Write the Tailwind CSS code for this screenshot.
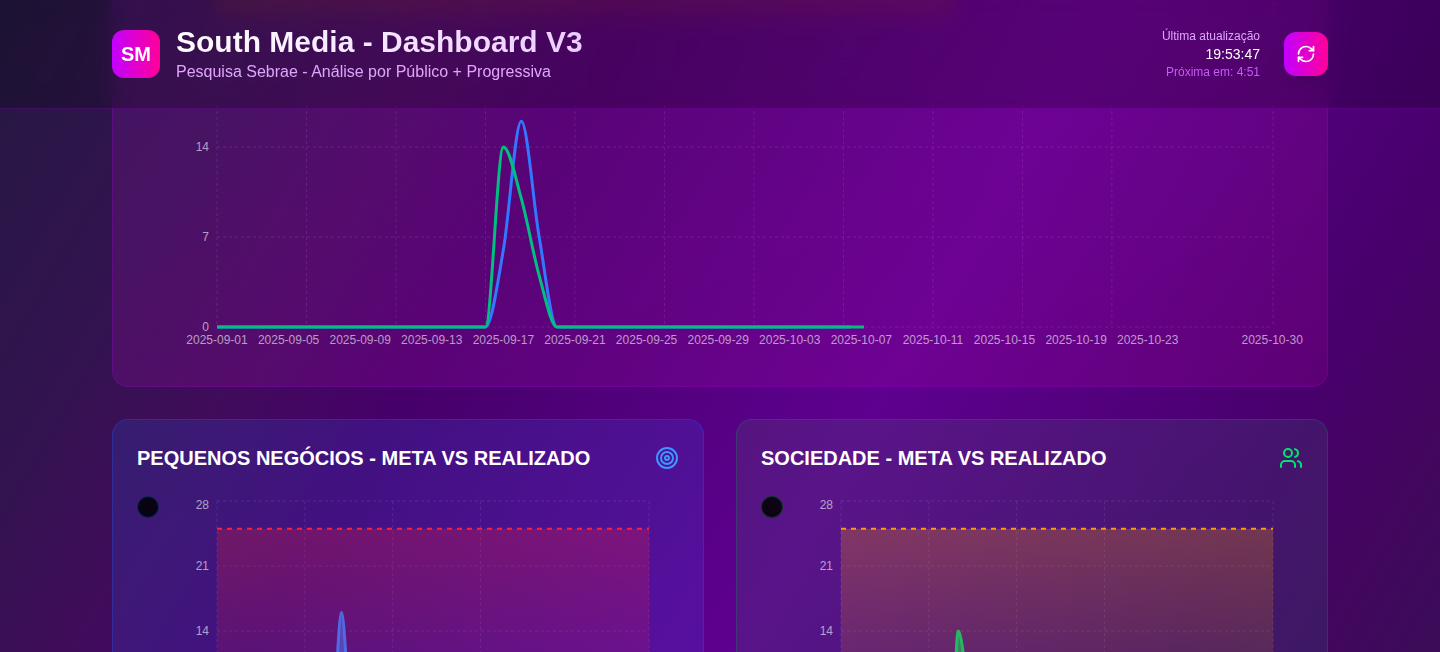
<!DOCTYPE html>
<html lang="pt-BR">
<head>
<meta charset="utf-8">
<title>South Media - Dashboard V3</title>
<script src="https://cdn.jsdelivr.net/npm/@tailwindcss/browser@4"></script>
</head>
<body class="h-[652px] overflow-hidden font-['Liberation_Sans',Arial,sans-serif] text-white bg-[linear-gradient(120deg,#241840_0px,#281745_60px,#331350_250px,#410b5c_400px,#46006a_550px,#5e0090_963px,#48006c_1330px,#43065f_1450px,#3b0c58_1570px)]">

<header class="fixed inset-x-0 top-0 z-20 border-b border-[rgba(150,0,210,0.3)] bg-black/20 backdrop-blur-md">
  <div class="mx-auto flex max-w-7xl items-center justify-between px-8 py-6">
    <div class="flex items-center gap-4">
      <div class="flex size-12 items-center justify-center rounded-xl bg-[linear-gradient(90deg,#c300ff,#ff0099)] text-xl font-bold">SM</div>
      <div>
        <h1 class="bg-linear-to-r from-white to-[#ecccff] bg-clip-text text-3xl font-bold text-transparent">South Media - Dashboard V3</h1>
        <p class="text-base text-[#dda6fb]">Pesquisa Sebrae - Análise por Público + Progressiva</p>
      </div>
    </div>
    <div class="flex items-center gap-6">
      <div class="text-right">
        <p class="text-xs text-[#dda6fb]">Última atualização</p>
        <p class="text-sm">19:53:47</p>
        <p class="text-xs text-[#c45cf5]">Próxima em: 4:51</p>
      </div>
      <button class="rounded-xl bg-[linear-gradient(90deg,#c300ff,#ff0099)] p-3 shadow-lg" aria-label="Atualizar">
        <svg class="size-5" viewBox="0 0 24 24" fill="none" stroke="currentColor" stroke-width="2" stroke-linecap="round" stroke-linejoin="round"><path d="M3 12a9 9 0 0 1 9-9 9.75 9.75 0 0 1 6.74 2.74L21 8"/><path d="M21 3v5h-5"/><path d="M21 12a9 9 0 0 1-9 9 9.75 9.75 0 0 1-6.74-2.74L3 16"/><path d="M8 16H3v5"/></svg>
      </button>
    </div>
  </div>
</header>

<main class="mx-auto -mt-[115px] flex h-[767px] max-w-7xl flex-col gap-8 overflow-hidden px-8">
  <section class="rounded-2xl border border-[rgba(150,0,210,0.3)] bg-linear-to-br from-[rgba(155,15,195,0.2)] to-[rgba(180,0,155,0.2)] bg-origin-border p-6">
    <div class="mb-6 h-7"></div>
    <svg id="daily" class="block h-[400px] w-full overflow-visible text-xs" viewBox="0 0 1166 400"></svg>
  </section>

  <div class="grid grid-cols-2 gap-8">
    <section class="rounded-2xl border border-[rgba(30,90,255,0.3)] bg-linear-to-br from-[rgba(40,85,220,0.2)] to-[rgba(75,75,235,0.2)] bg-origin-border p-6">
      <div class="mb-6 flex items-center justify-between">
        <h2 class="text-xl font-bold uppercase">Pequenos Negócios - Meta vs Realizado</h2>
        <svg class="size-6 text-[#3b96ff]" viewBox="0 0 24 24" fill="none" stroke="currentColor" stroke-width="2"><circle cx="12" cy="12" r="10"/><circle cx="12" cy="12" r="6"/><circle cx="12" cy="12" r="2"/></svg>
      </div>
      <div class="relative">
        <svg id="business" class="block h-[300px] w-full overflow-visible text-xs" viewBox="0 0 542 300"></svg>
        <div class="absolute left-0 top-0 size-[22px] rounded-xl border border-[rgba(30,110,255,0.3)] bg-black/85 shadow-2xl"></div>
      </div>
    </section>
    <section class="rounded-2xl border border-[rgba(0,150,80,0.3)] bg-linear-to-br from-[rgba(80,100,105,0.2)] to-[rgba(30,100,135,0.2)] bg-origin-border p-6">
      <div class="mb-6 flex items-center justify-between">
        <h2 class="text-xl font-bold uppercase">Sociedade - Meta vs Realizado</h2>
        <svg class="size-6 text-[#00e56b]" viewBox="0 0 24 24" fill="none" stroke="currentColor" stroke-width="2" stroke-linecap="round" stroke-linejoin="round"><path d="M16 21v-2a4 4 0 0 0-4-4H6a4 4 0 0 0-4 4v2"/><circle cx="9" cy="7" r="4"/><path d="M22 21v-2a4 4 0 0 0-3-3.87"/><path d="M16 3.13a4 4 0 0 1 0 7.75"/></svg>
      </div>
      <div class="relative">
        <svg id="society" class="block h-[300px] w-full overflow-visible text-xs" viewBox="0 0 542 300"></svg>
        <div class="absolute left-0 top-0 size-[22px] rounded-xl border border-[rgba(0,170,90,0.3)] bg-black/85 shadow-2xl"></div>
      </div>
    </section>
  </div>
</main>

<script>
const blue = [[0,0],[15,0],[16,6],[17,16],[18,7],[19,0]];
const green = [[0,0],[15,0],[16,14],[17,10],[18,4],[19,0]];
const LEFT = 80, TOP = 5;

// Monotone cubic interpolation through the given points
function curve(p) {
  const n = p.length, m = [];
  const s = i => (p[i+1][1]-p[i][1])/(p[i+1][0]-p[i][0]);
  for (let i = 1; i < n-1; i++) {
    const h0 = p[i][0]-p[i-1][0], h1 = p[i+1][0]-p[i][0], s0 = s(i-1), s1 = s(i);
    const q = (s0*h1+s1*h0)/(h0+h1);
    m[i] = (Math.sign(s0)+Math.sign(s1))*Math.min(Math.abs(s0), Math.abs(s1), .5*Math.abs(q)) || 0;
  }
  m[0] = (3*s(0)-m[1])/2; m[n-1] = (3*s(n-2)-m[n-2])/2;
  let d = `M${p[0]}`;
  for (let i = 0; i < n-1; i++) {
    const h = (p[i+1][0]-p[i][0])/3;
    d += `C${p[i][0]+h},${p[i][1]+h*m[i]} ${p[i+1][0]-h},${p[i+1][1]-h*m[i+1]} ${p[i+1]}`;
  }
  return d;
}
function scale(w, h) { return { x: i => LEFT+i*w/59, y: v => TOP+h-v*h/28, w, h }; }
function pts(sc, data, end) { return [...data, [20,0], [end,0]].map(([i,v]) => [sc.x(i), sc.y(v)]); }
function grid(sc, idx, values) {
  let s = '<g stroke="#fff" stroke-opacity=".1" stroke-dasharray="3 3">';
  for (const v of values) s += `<line x1="${LEFT}" x2="${LEFT+sc.w}" y1="${sc.y(v)}" y2="${sc.y(v)}"/>`;
  for (const i of idx) s += `<line x1="${sc.x(i)}" x2="${sc.x(i)}" y1="${TOP}" y2="${TOP+sc.h}"/>`;
  return s + '</g>';
}
function yLabels(sc, values) {
  return values.map(v => `<text x="${LEFT-8}" y="${(v === 28 ? 9 : sc.y(v))+4.26}" text-anchor="end" fill="#fff" fill-opacity=".6">${v}</text>`).join('');
}
function day(i) { return i < 30 ? `2025-09-${String(i+1).padStart(2,'0')}` : `2025-10-${String(i-29).padStart(2,'0')}`; }
function xLabels(sc, idx) {
  return idx.map(i => `<text x="${sc.x(i)-(i === 59 ? .8 : 0)}" y="${TOP+sc.h+16.5}" text-anchor="middle" fill="#fff" fill-opacity=".6">${day(i)}</text>`).join('');
}

const a = scale(1056, 360);
document.getElementById('daily').innerHTML = '<defs><filter id="soft" x="-5%" y="-100%" width="110%" height="300%"><feGaussianBlur stdDeviation="5"/></filter></defs>'
  + grid(a, [0,5,10,15,20,25,30,35,40,45,50,59], [0,7,14])
  + xLabels(a, [0,4,8,12,16,20,24,28,32,36,40,44,48,52,59]) + yLabels(a, [0,7,14])
  + '<rect x="80" y="26" width="738" height="28" fill="#c83c18" fill-opacity=".13" filter="url(#soft)"/>'
  + `<g fill="none" stroke-width="3"><path stroke="#3377ff" d="${curve(pts(a, blue, 35.4))}"/><path stroke="#00bf7f" d="${curve(pts(a, green, 36.15))}"/></g>`;

function area(id, data, stroke, goal) {
  const b = scale(432, 260), base = TOP+b.h, d = curve(pts(b, data, 36)), gy = b.y(25);
  document.getElementById(id).innerHTML = `<defs><linearGradient id="${id}-goal" x1="0" y1="0" x2="0" y2="1"><stop offset="0" stop-color="${goal}" stop-opacity=".25"/><stop offset="1" stop-color="${goal}" stop-opacity=".02"/></linearGradient></defs>`
    + grid(b, [0,12,24,36,59], [14,21,28]) + yLabels(b, [14,21,28])
    + `<path d="${d}V${base}H${LEFT}Z" fill="${stroke}" fill-opacity=".6"/><path d="${d}" fill="none" stroke="${stroke}" stroke-width="3"/>`
    + `<rect x="${LEFT}" y="${gy}" width="432" height="${base-gy}" fill="url(#${id}-goal)"/>`
    + `<path d="M${LEFT},${gy}H${LEFT+432}" stroke="${goal}" stroke-width="2" stroke-dasharray="5 5"/>`;
}
area('business', blue, '#3377ff', '#ff2030');
area('society', green, '#00bf70', '#ff9d00');
</script>
</body>
</html>
